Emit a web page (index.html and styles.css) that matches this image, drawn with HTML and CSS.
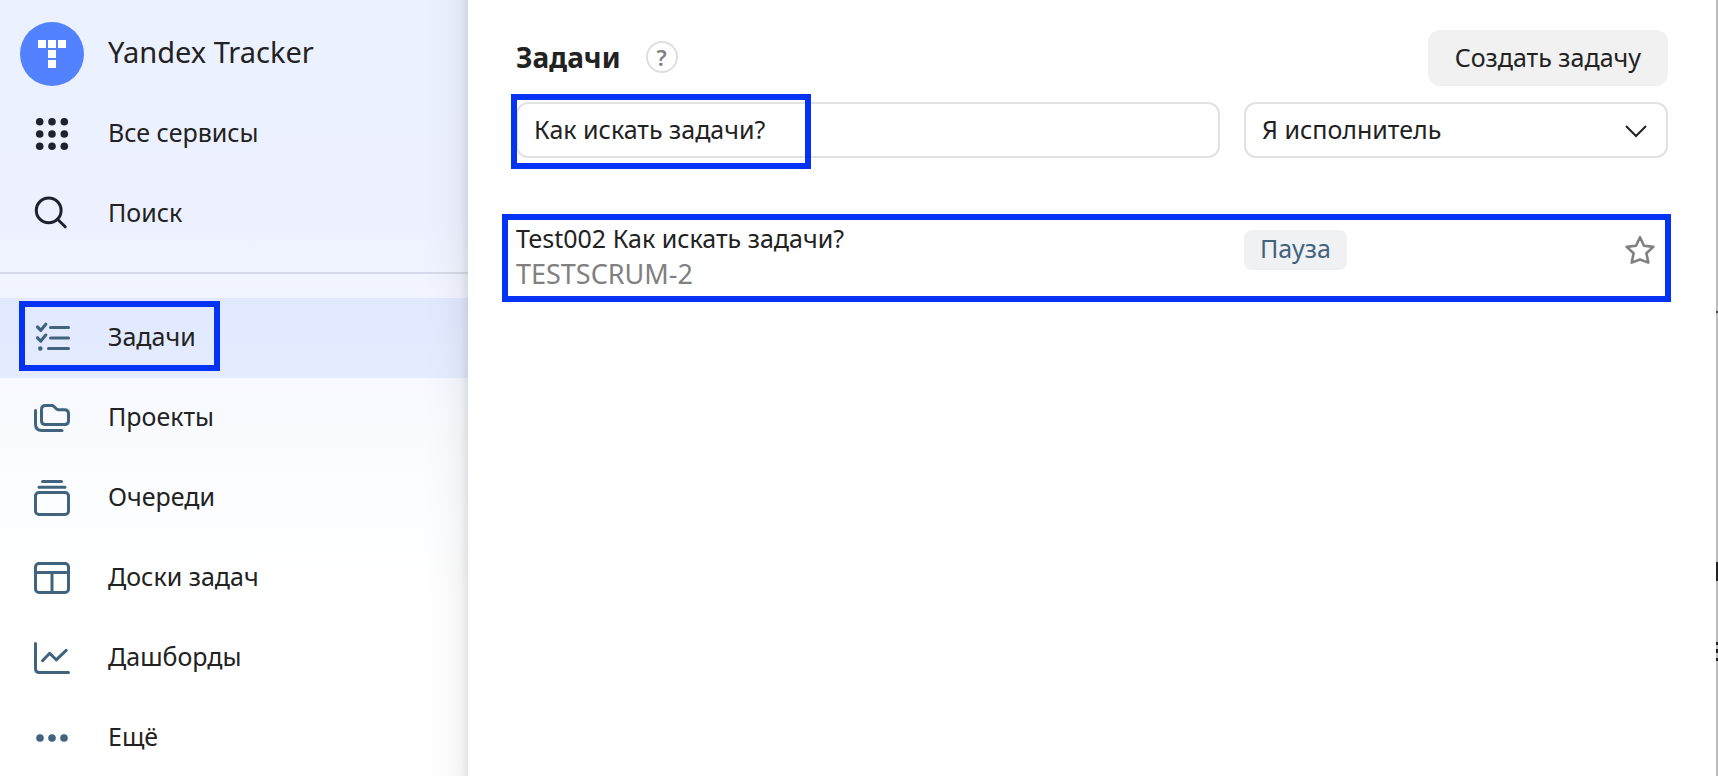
FILE: index.html
```html
<!DOCTYPE html>
<html lang="ru">
  <head>
    <meta charset="utf-8">
    <meta name="viewport" content="width=device-width, initial-scale=1.0">
    <title>Задачи</title>
    <link rel="stylesheet" href="styles.css">
  </head>
  <body>
    <aside class="sidebar">
      <nav class="menu menu-top">
        <a class="menu-item brand" href="#">
          <svg class="logo" viewBox="0 0 64 64">
            <circle cx="32" cy="32" r="32" fill="#5282ff"/>
            <path fill="#fff" d="M18 18h8v8h-8zM28 18h8v8h-8zM38 18h8v8h-8zM28 28h8v8h-8zM28 38h8v8h-8z"/>
          </svg>
          <span>Yandex Tracker</span>
        </a>
        <a class="menu-item" href="#">
          <svg class="icon icon-dark" viewBox="0 0 40 40">
            <g fill="currentColor" stroke="none">
              <circle cx="7.7" cy="7.7" r="3.8"/><circle cx="20" cy="7.7" r="3.8"/><circle cx="32.3" cy="7.7" r="3.8"/>
              <circle cx="7.7" cy="20" r="3.8"/><circle cx="20" cy="20" r="3.8"/><circle cx="32.3" cy="20" r="3.8"/>
              <circle cx="7.7" cy="32.3" r="3.8"/><circle cx="20" cy="32.3" r="3.8"/><circle cx="32.3" cy="32.3" r="3.8"/>
            </g>
          </svg>
          <span>Все сервисы</span>
        </a>
        <a class="menu-item" href="#">
          <svg class="icon icon-dark" viewBox="0 0 40 40">
            <circle cx="16.7" cy="16.4" r="12.4"/>
            <path d="M25.5 25.3l7.700 7.500"/>
          </svg>
          <span>Поиск</span>
        </a>
      </nav>
      <nav class="menu">
        <a class="menu-item active" href="#">
          <svg class="icon" viewBox="0 0 40 40">
            <path d="M18.5 9.5h18M18.5 20h18M16.5 30.5h20"/>
            <path stroke-width="3.2" d="M5.5 9l3.300 3.300 5-6M5.5 19.800l3.300 3.300 5-6"/>
            <circle cx="8.3" cy="30.5" r="2.3" fill="currentColor" stroke="none"/>
          </svg>
          <span>Задачи</span>
        </a>
        <a class="menu-item" href="#">
          <svg class="icon" viewBox="0 0 40 40">
            <path d="M13.500 7.500h6q1.500 0 2.500 1l2 2q1 1.200 2.500 1.200h6q4 0 4 4v6.800q0 4-4 4h-19q-4 0-4-4v-11q0-4 4-4z"/>
            <path d="M3.500 12.500v13.500q0 6.500 6.500 6.500h20"/>
          </svg>
          <span>Проекты</span>
        </a>
        <a class="menu-item" href="#">
          <svg class="icon" viewBox="0 0 40 40">
            <path d="M10.500 3.500h19M7 9.200h26"/>
            <rect x="3.500" y="14.500" width="33" height="22" rx="3.500"/>
          </svg>
          <span>Очереди</span>
        </a>
        <a class="menu-item" href="#">
          <svg class="icon" viewBox="0 0 40 40">
            <rect x="3.500" y="5.500" width="33" height="29" rx="3.500"/>
            <path d="M3.500 14.500h33M20 14.500v20"/>
          </svg>
          <span>Доски задач</span>
        </a>
        <a class="menu-item" href="#">
          <svg class="icon" viewBox="0 0 40 40">
            <path d="M3.500 5.500v25q0 4 4 4h29"/>
            <path d="M10.500 22.700l7.200-7.400 6.500 6.500 10-9.500"/>
          </svg>
          <span>Дашборды</span>
        </a>
        <a class="menu-item" href="#">
          <svg class="icon" viewBox="0 0 40 40">
            <g fill="currentColor" stroke="none">
              <circle cx="8" cy="20" r="3.8"/><circle cx="20" cy="20" r="3.8"/><circle cx="32" cy="20" r="3.8"/>
            </g>
          </svg>
          <span>Ещё</span>
        </a>
      </nav>
    </aside>

    <main class="content">
      <header class="header">
        <h1>Задачи</h1>
        <button class="help" type="button">?</button>
        <button class="create" type="button">Создать задачу</button>
      </header>

      <form class="filters">
        <div class="field marked">
          <input type="text" value="Как искать задачи?" aria-label="Поиск задач">
        </div>
        <div class="field">
          <select aria-label="Фильтр">
            <option>Я исполнитель</option>
          </select>
          <svg class="chevron" viewBox="0 0 24 24"><path d="M2 7l10 10L22 7"/></svg>
        </div>
      </form>

      <ul class="tasks">
        <li class="task">
          <div>
            <a class="task-title" href="#">Test002 Как искать задачи?</a>
            <div class="task-key">TESTSCRUM-2</div>
          </div>
          <div class="task-side">
            <span class="status">Пауза</span>
            <button class="star" type="button" aria-label="В избранное">
              <svg viewBox="0 0 32 32"><path d="M16 3.200l4 8.600 9.300 1.100-6.900 6.300 1.900 9.400L16 25.500l-8.300 3.100 1.900-9.400-6.900-6.300L12 11.800z"/></svg>
            </button>
          </div>
        </li>
      </ul>
    </main>
    <div class="page-edge"></div>
  </body>
</html>
```

FILE: styles.css
```css
*, *::after {
  box-sizing: border-box;
}
html, body {
  height: 100%;
  margin: 0;
}
body {
  display: flex;
  overflow: hidden;
  background: #fff;
  color: #222;
  font-family: "Noto Sans", "Open Sans", sans-serif;
  font-size: 25px;
  line-height: 36px;
}
a {
  color: inherit;
  text-decoration: none;
}
button, input, select {
  font: inherit;
  color: inherit;
}

/* sidebar */
.sidebar {
  flex: 0 0 468px;
  background:
    linear-gradient(to left, rgba(0, 0, 0, .11), rgba(0, 0, 0, .04) 8px, rgba(0, 0, 0, .01) 24px, transparent 44px),
    linear-gradient(#ecf1ff, #edf1ff 220px, #f6f9ff 380px, #fcfdff 500px, #fff 600px);
}
.menu {
  padding-top: 24px;
}
.menu-top {
  padding: 14px 0 18px;
  border-bottom: 2px solid rgba(60, 70, 110, .15);
}
.menu-item {
  position: relative;
  display: flex;
  align-items: center;
  gap: 36px;
  height: 80px;
  padding-left: 32px;
}
.menu-item span {
  padding-bottom: 4px;
}
.menu-item.brand {
  gap: 24px;
  padding-left: 20px;
  font-size: 29px;
}
.menu-item.active {
  background: rgba(82, 130, 255, .1);
}
.menu-item.active::after {
  content: "";
  position: absolute;
  top: 3px;
  left: 19px;
  width: 201px;
  height: 70px;
  border: 6px solid #0433f5;
}
.logo {
  width: 64px;
  height: 64px;
}
.icon {
  width: 40px;
  height: 40px;
  color: #41637e;
  fill: none;
  stroke: currentColor;
  stroke-width: 3;
  stroke-linecap: round;
  stroke-linejoin: round;
}
.icon-dark {
  color: #1f222e;
}

/* content */
.content {
  flex: 1;
  padding: 30px 48px 0;
}
.header {
  display: flex;
  align-items: center;
}
h1 {
  margin: 0;
  padding-bottom: 2px;
  font-size: 28px;
}
.help {
  width: 32px;
  height: 32px;
  margin: 0 0 3px 25px;
  padding: 0;
  border: 2px solid #dedede;
  border-radius: 50%;
  background: none;
  color: #808080;
  font-size: 22px;
  font-weight: 600;
  line-height: 28px;
}
.create {
  height: 56px;
  margin-left: auto;
  padding: 0 27px 2px;
  border: 0;
  border-radius: 12px;
  background: #f1f1f1;
}
.filters, .task {
  display: grid;
  grid-template-columns: 1fr 424px;
  gap: 24px;
}
.filters {
  margin-top: 16px;
}
.field {
  position: relative;
}
.field input, .field select {
  display: block;
  width: 100%;
  height: 56px;
  padding: 0 16px 2px;
  border: 2px solid #e2e2e2;
  border-radius: 12px;
  background: #fff;
  outline: none;
  appearance: none;
}
.field.marked::after {
  content: "";
  position: absolute;
  top: -8px;
  left: -5px;
  width: 300px;
  height: 75px;
  border: 6px solid #0433f5;
  pointer-events: none;
}
.chevron {
  position: absolute;
  top: 17px;
  right: 20px;
  width: 24px;
  height: 24px;
  fill: none;
  stroke: #222;
  stroke-width: 2;
  pointer-events: none;
}

/* task list */
.tasks {
  margin: 62px 0 0;
  padding: 0;
  list-style: none;
}
.task {
  position: relative;
}
.task::after {
  content: "";
  position: absolute;
  inset: -6px -3px -10px -14px;
  border: 6px solid #0433f5;
  pointer-events: none;
}
.task-key {
  color: #808080;
  font-size: 27px;
}
.task-side {
  display: flex;
  align-items: flex-start;
  justify-content: space-between;
  padding: 10px 12px 0 0;
}
.status {
  padding: 0 16px 4px;
  border-radius: 8px;
  background: #eff1f2;
  color: #41637e;
}
.star {
  width: 32px;
  height: 40px;
  padding: 4px 0;
  border: 0;
  background: none;
}
.star svg {
  display: block;
  fill: none;
  stroke: #808080;
  stroke-width: 2.6;
  stroke-linejoin: round;
}

/* slice of the dimmed page behind the panel */
.page-edge {
  flex: 0 0 2px;
  background:
    linear-gradient(#444, #444) 0 311px / 2px 2px no-repeat,
    linear-gradient(#222, #222) 0 562px / 2px 19px no-repeat,
    linear-gradient(#222, #222) 0 642px / 2px 3px no-repeat,
    linear-gradient(#222, #222) 0 649px / 2px 4px no-repeat,
    linear-gradient(#222, #222) 0 658px / 2px 3px no-repeat,
    #bcbcbc;
}
```
